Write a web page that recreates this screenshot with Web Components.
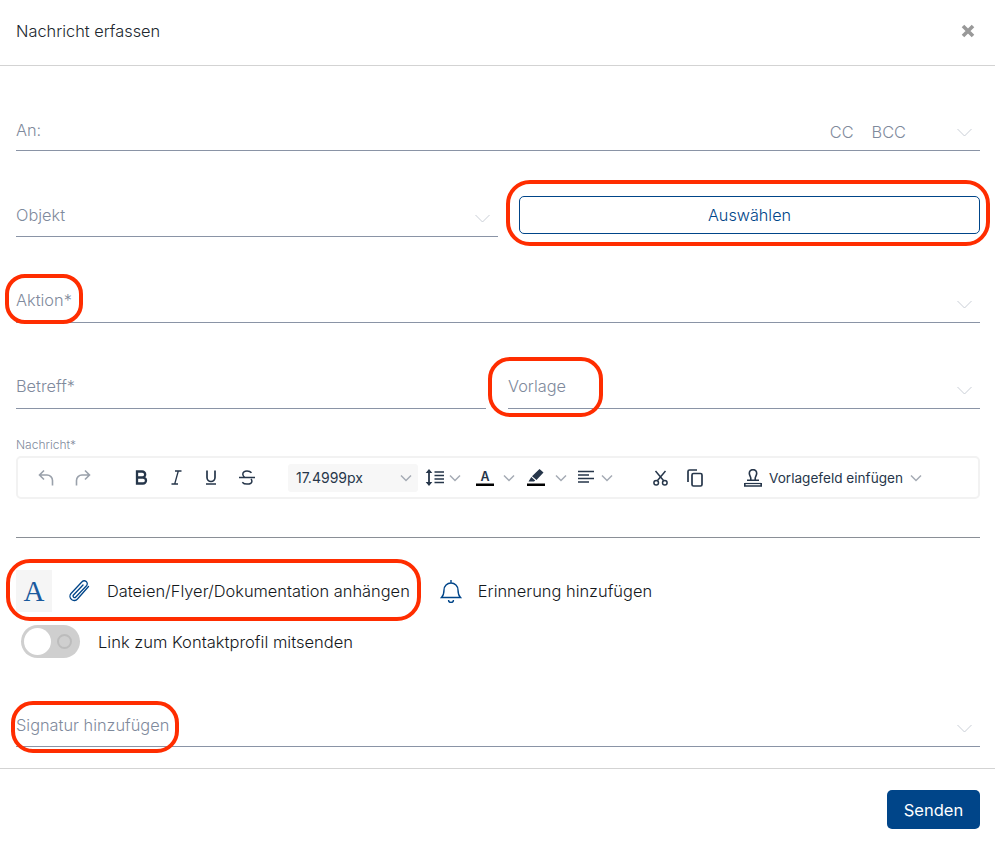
<!DOCTYPE html>
<html lang="de">
<head>
<meta charset="utf-8">
<title>Nachricht erfassen</title>
<style>
  html, body { margin: 0; padding: 0; background: #fff; }
  body { font-family: Inter, "Liberation Sans", sans-serif; position: relative; width: 995px; height: 842px; overflow: hidden; }
</style>
</head>
<body>
<message-dialog>
  <span slot="title">Nachricht erfassen</span>

  <form-row first>
    <form-field label="An:" lift="0">
      <span slot="extra" class="cc">CC</span>
      <span slot="extra" class="cc">BCC</span>
    </form-field>
  </form-row>
  <form-row>
    <form-field label="Objekt" width="482" lift="1"></form-field>
    <outline-button>Auswählen</outline-button>
  </form-row>
  <form-row>
    <form-field label="Aktion*" lift="2"></form-field>
  </form-row>
  <form-row>
    <form-field label="Betreff*" width="470" lift="2" nochevron></form-field>
    <form-field label="Vorlage" lift="2" tight></form-field>
  </form-row>

  <editor-box label="Nachricht*"></editor-box>
  <attach-row></attach-row>
  <toggle-row>Link zum Kontaktprofil mitsenden</toggle-row>
  <form-row last>
    <form-field label="Signatur hinzufügen" lift="1"></form-field>
  </form-row>

  <send-button slot="footer">Senden</send-button>
</message-dialog>

<red-mark x="506" y="180" w="484" h="66" r="24"></red-mark>
<red-mark x="5" y="274" w="78" h="50" r="20"></red-mark>
<red-mark x="488" y="357" w="115" h="60" r="22"></red-mark>
<red-mark x="6" y="559" w="415" h="62" r="24"></red-mark>
<red-mark x="11" y="701" w="168" h="52" r="22"></red-mark>

<script>
const CHEVRON = '<svg width="15" height="9" viewBox="0 0 15 9" fill="none" stroke="#c9ced6" stroke-width="1"><path d="M.5 1l7 7 7-7"/></svg>';
const TOOL_CHEV = '<svg width="12" height="8" viewBox="0 0 12 8" fill="none" stroke="#a5abb4" stroke-width="1.5"><path d="M1 1.5l5 5 5-5"/></svg>';

class MessageDialog extends HTMLElement {
  connectedCallback() {
    this.attachShadow({ mode: 'open' });
    this.shadowRoot.innerHTML = `
      <style>
        :host { display: flex; flex-direction: column; width: 995px; height: 842px; color: #1f2933; }
        header { flex: none; box-sizing: border-box; height: 66px; border-bottom: 1px solid #d3d3d3; display: flex; align-items: center; justify-content: space-between; padding: 0 20px 4px 16px; font-size: 16.35px; font-weight: 300; color: #20272e; }
        main { flex: none; box-sizing: border-box; height: 702px; padding: 0 15px 0 16px; }
        footer { flex: none; box-sizing: border-box; height: 74px; border-top: 1px solid #d3d3d3; display: flex; justify-content: flex-end; align-items: flex-start; padding: 21px 15px 0 0; }
        svg { display: block; }
      </style>
      <header>
        <slot name="title"></slot>
        <svg width="14" height="14" viewBox="0 0 14 14" stroke="#999" stroke-width="3.6" fill="none"><path d="M2 2l10 10M12 2L2 12"/></svg>
      </header>
      <main><slot></slot></main>
      <footer><slot name="footer"></slot></footer>`;
  }
}

class FormRow extends HTMLElement {
  connectedCallback() {
    this.attachShadow({ mode: 'open' });
    this.shadowRoot.innerHTML = `
      <style>
        :host { display: flex; align-items: flex-end; height: 86px; gap: 21px; }
        :host([first]) { height: 85px; }
        :host([last]) { height: 89px; }
      </style>
      <slot></slot>`;
  }
}

class FormField extends HTMLElement {
  connectedCallback() {
    this.attachShadow({ mode: 'open' });
    const w = this.getAttribute('width');
    const chev = this.hasAttribute('nochevron') ? '' : CHEVRON;
    const lift = (this.getAttribute('lift') || 0) * 2;
    this.shadowRoot.innerHTML = `
      <style>
        :host { display: flex; align-items: center; box-sizing: border-box; height: 42px; border-bottom: 1px solid #8a94a6; flex: ${w ? `0 0 ${w}px` : '1 1 0'}; font-size: 16.35px; font-weight: 300; color: #7f8a9c; ${this.hasAttribute('tight') ? 'margin-left: 1px;' : ''} }
        .label { flex: 1; padding-bottom: ${lift}px; }
        .extra { display: flex; gap: 18px; padding-top: 4px; margin-right: 51px; }
        .chev { width: 15px; margin-right: 8px; padding-top: 2px; }
        ::slotted(.cc) { color: #7f8a9c; }
      </style>
      <span class="label">${this.getAttribute('label')}</span>
      <span class="extra"><slot name="extra"></slot></span>
      <span class="chev">${chev}</span>`;
  }
}

class OutlineButton extends HTMLElement {
  connectedCallback() {
    this.attachShadow({ mode: 'open' });
    this.shadowRoot.innerHTML = `
      <style>
        :host { display: flex; flex: 1; align-items: center; justify-content: center; height: 38px; box-sizing: border-box; border: 1px solid #004589; border-radius: 5px; color: #004589; font-size: 16.2px; font-weight: 300; margin-bottom: 3px; }
      </style>
      <slot></slot>`;
  }
}

class EditorBox extends HTMLElement {
  connectedCallback() {
    this.attachShadow({ mode: 'open' });
    this.shadowRoot.innerHTML = `
      <style>
        :host { display: block; height: 129px; box-sizing: border-box; padding-top: 27px; border-bottom: 1px solid #8a8f96; }
        label { display: block; font-size: 12px; font-weight: 300; line-height: 18px; color: #7f8a9c; height: 20px; }
      </style>
      <label>${this.getAttribute('label')}</label>
      <editor-toolbar></editor-toolbar>`;
  }
}

class EditorToolbar extends HTMLElement {
  connectedCallback() {
    this.attachShadow({ mode: 'open' });
    const ink = '#26364a';
    this.shadowRoot.innerHTML = `
      <style>
        :host { display: flex; align-items: center; height: 43px; box-sizing: border-box; border: 2px solid #f2f2f2; border-radius: 5px; color: ${ink}; font-size: 13px; }
        svg { display: block; flex: none; }
        .c { display: block; flex: none; }
        .t { display: flex; align-items: center; flex: none; }
        .size { width: 130px; height: 28px; margin-left: 33px; box-sizing: border-box; padding: 0 6px 0 8px; background: #f7f7f7; border-radius: 3px; justify-content: space-between; font-size: 14px; }
        .tpl { margin-left: 41px; font-size: 13.6px; }
      </style>
      <svg style="margin-left:20px" width="16" height="18" viewBox="0 0 16 18" fill="none" stroke="#9aa1ab" stroke-width="1.6"><path d="M6 1.5L1.5 6 6 10.5M1.5 6H9a5.5 5.5 0 0 1 5.500 5.500V16.500"/></svg>
      <svg style="margin-left:21px" width="16" height="18" viewBox="0 0 16 18" fill="none" stroke="#9aa1ab" stroke-width="1.6"><path d="M10 1.5L14.500 6 10 10.500M14.500 6H7a5.500 5.500 0 0 0-5.500 5.500V16.500"/></svg>
      <svg style="margin-left:44px" width="13" height="15" viewBox="0 0 13 15" fill="none" stroke="${ink}" stroke-width="2.3"><path d="M2 1.500h5.200a3 3 0 0 1 0 6H2zM2 7.500h6a3 3 0 0 1 0 6H2zM2 .5v14"/></svg>
      <svg style="margin-left:23px" width="11" height="15" viewBox="0 0 11 15" fill="none" stroke="${ink}" stroke-width="1.3"><path d="M4 1h6.500M.5 14H7M7.300 1L3.700 14"/></svg>
      <svg style="margin-left:23px" width="12" height="15" viewBox="0 0 12 15" fill="none" stroke="${ink}" stroke-width="1.7"><path d="M2 .5v7a4 4 0 0 0 8 0v-7M1 14h10"/></svg>
      <svg style="margin-left:22px" width="16" height="15" viewBox="0 0 16 15" fill="none" stroke="${ink}" stroke-width="1.5"><path d="M12.500 2.800C11.500 1.600 10 1 8 1 5.500 1 3.800 2.200 3.800 4.200c0 1.200.7 2.300 2.200 3.300M12 9c.6.700.9 1.500.9 2.200 0 2-1.900 2.900-4.900 2.900-2.200 0-3.700-.7-4.700-1.900M0 7.500h16"/></svg>
      <span class="t size">17.4999px ${TOOL_CHEV}</span>
      <svg style="margin-left:7px" width="19" height="17" viewBox="0 0 19 17" fill="none" stroke="${ink}"><path stroke-width="1.800" d="M4 2v13"/><path fill="${ink}" stroke="none" d="M4 0l3.300 4H.7zM4 17l3.300-4H.7z"/><path stroke-width="1.500" d="M9.500 3h9.500M9.500 6.500h9.500M9.500 10h9.500M9.500 13.500h9.500"/></svg>
      <span class="c" style="margin-left:5px">${TOOL_CHEV}</span>
      <svg style="margin-left:15px" width="18" height="17" viewBox="0 0 18 17"><text x="9" y="11.500" text-anchor="middle" font-family="Inter, sans-serif" font-weight="600" font-size="12.500" fill="${ink}">A</text><rect y="14.500" width="18" height="2.500" fill="#000"/></svg>
      <span class="c" style="margin-left:9px">${TOOL_CHEV}</span>
      <svg style="margin-left:12px" width="18" height="17" viewBox="0 0 18 17"><path fill="${ink}" d="M12.500 0l4 3.500-7 7.500-4.500-3.800zM4.300 8l3.900 3.400-1.200 1.100H1.500z"/><rect y="14.500" width="18" height="2.500" fill="#000"/></svg>
      <span class="c" style="margin-left:10px">${TOOL_CHEV}</span>
      <svg style="margin-left:11px" width="16" height="15" viewBox="0 0 16 15" stroke="${ink}" stroke-width="1.500"><path d="M0 1.500h16M0 5h11M0 8.500h16M0 12h11"/></svg>
      <span class="c" style="margin-left:7px">${TOOL_CHEV}</span>
      <svg style="margin-left:40px" width="15" height="16" viewBox="0 0 15 16" fill="none" stroke="${ink}" stroke-width="1.500"><path d="M2.500 1l8 9.500M12.500 1l-8 9.500"/><circle cx="3.200" cy="12.700" r="2.300"/><circle cx="11.800" cy="12.700" r="2.300"/></svg>
      <svg style="margin-left:19px" width="16" height="18" viewBox="0 0 16 18" fill="none" stroke="${ink}" stroke-width="1.700"><path d="M1 13V2.500A1.500 1.500 0 0 1 2.500 1H10"/><rect x="5" y="4.500" width="10" height="12.500" rx="1.500"/></svg>
      <span class="t tpl">
        <svg width="18" height="18" viewBox="0 0 18 18" fill="none" stroke="${ink}" stroke-width="1.600" style="margin-right:7px"><path d="M6.800 11V9.300C6.800 7.500 5.300 6.500 5.300 4.300a3.700 3.700 0 0 1 7.400 0c0 2.200-1.500 3.200-1.500 5V11M3 11.200h12M.8 14v3h16.400v-3"/><path d="M.8 14.500h16.400" stroke-width="1.200"/></svg>
        Vorlagefeld einfügen
        <span class="c" style="margin-left:7px">${TOOL_CHEV}</span>
      </span>`;
  }
}

class AttachRow extends HTMLElement {
  connectedCallback() {
    this.attachShadow({ mode: 'open' });
    this.shadowRoot.innerHTML = `
      <style>
        :host { display: flex; align-items: center; height: 42px; margin-top: 32px; font-size: 16.42px; font-weight: 300; color: #14181c; }
        .a { width: 36px; height: 42px; background: #f5f5f5; display: flex; align-items: center; justify-content: center; font-family: "Liberation Serif", serif; font-size: 29px; color: #1a5a9e; }
        svg { display: block; flex: none; }
      </style>
      <span class="a">A</span>
      <svg style="margin-left:15px" width="24" height="24" viewBox="0 0 24 24" fill="none" stroke="#004589" stroke-width="1.300" stroke-linecap="round"><path d="M21.500 7.500L10.500 20a4.200 4.200 0 0 1-6.500-5.500L15 2.800a3 3 0 0 1 4.500 4L8.800 18a1.500 1.500 0 0 1-2.300-2L16 6"/></svg>
      <span style="margin-left:16px">Dateien/Flyer/Dokumentation anhängen</span>
      <svg style="margin-left:30px" width="22" height="24" viewBox="0 0 22 24" fill="none" stroke="#004589" stroke-width="1.400"><path d="M1.500 18.500c2-2 2.500-3.500 2.500-7.500a7 7 0 0 1 14 0c0 4 .5 5.500 2.500 7.500zM11 1v3M8.500 21a2.500 2.500 0 0 0 5 0"/></svg>
      <span style="margin-left:16px">Erinnerung hinzufügen</span>`;
  }
}

class ToggleRow extends HTMLElement {
  connectedCallback() {
    this.attachShadow({ mode: 'open' });
    this.shadowRoot.innerHTML = `
      <style>
        :host { display: flex; align-items: center; height: 33px; margin-top: 13px; margin-left: 5px; font-size: 16.55px; font-weight: 300; color: #14181c; }
        .track { position: relative; width: 59px; height: 33px; border-radius: 17px; background: #cfcfcf; box-sizing: border-box; }
        .knob { position: absolute; left: 3px; top: 3px; width: 27px; height: 27px; border-radius: 50%; background: #fff; }
        .ring { position: absolute; right: 8px; top: 9px; width: 15px; height: 15px; box-sizing: border-box; border-radius: 50%; border: 2px solid #bcbcbc; }
        span { margin-left: 18px; }
      </style>
      <div class="track"><div class="knob"></div><div class="ring"></div></div>
      <span><slot></slot></span>`;
  }
}

class SendButton extends HTMLElement {
  connectedCallback() {
    this.attachShadow({ mode: 'open' });
    this.shadowRoot.innerHTML = `
      <style>
        :host { display: flex; align-items: center; justify-content: center; width: 93px; height: 39px; border-radius: 5px; background: #004589; color: #fff; font-size: 16.5px; }
      </style>
      <slot></slot>`;
  }
}

// Rote Markierungen liegen frei über dem Formular
class RedMark extends HTMLElement {
  connectedCallback() {
    this.attachShadow({ mode: 'open' });
    const a = n => this.getAttribute(n) + 'px';
    this.shadowRoot.innerHTML = `
      <style>
        :host { position: absolute; left: ${a('x')}; top: ${a('y')}; width: ${a('w')}; height: ${a('h')}; box-sizing: border-box; border: 4px solid #ff2d00; border-radius: ${a('r')}; pointer-events: none; }
      </style>`;
  }
}

customElements.define('message-dialog', MessageDialog);
customElements.define('form-row', FormRow);
customElements.define('form-field', FormField);
customElements.define('outline-button', OutlineButton);
customElements.define('editor-box', EditorBox);
customElements.define('editor-toolbar', EditorToolbar);
customElements.define('attach-row', AttachRow);
customElements.define('toggle-row', ToggleRow);
customElements.define('send-button', SendButton);
customElements.define('red-mark', RedMark);
</script>
</body>
</html>
